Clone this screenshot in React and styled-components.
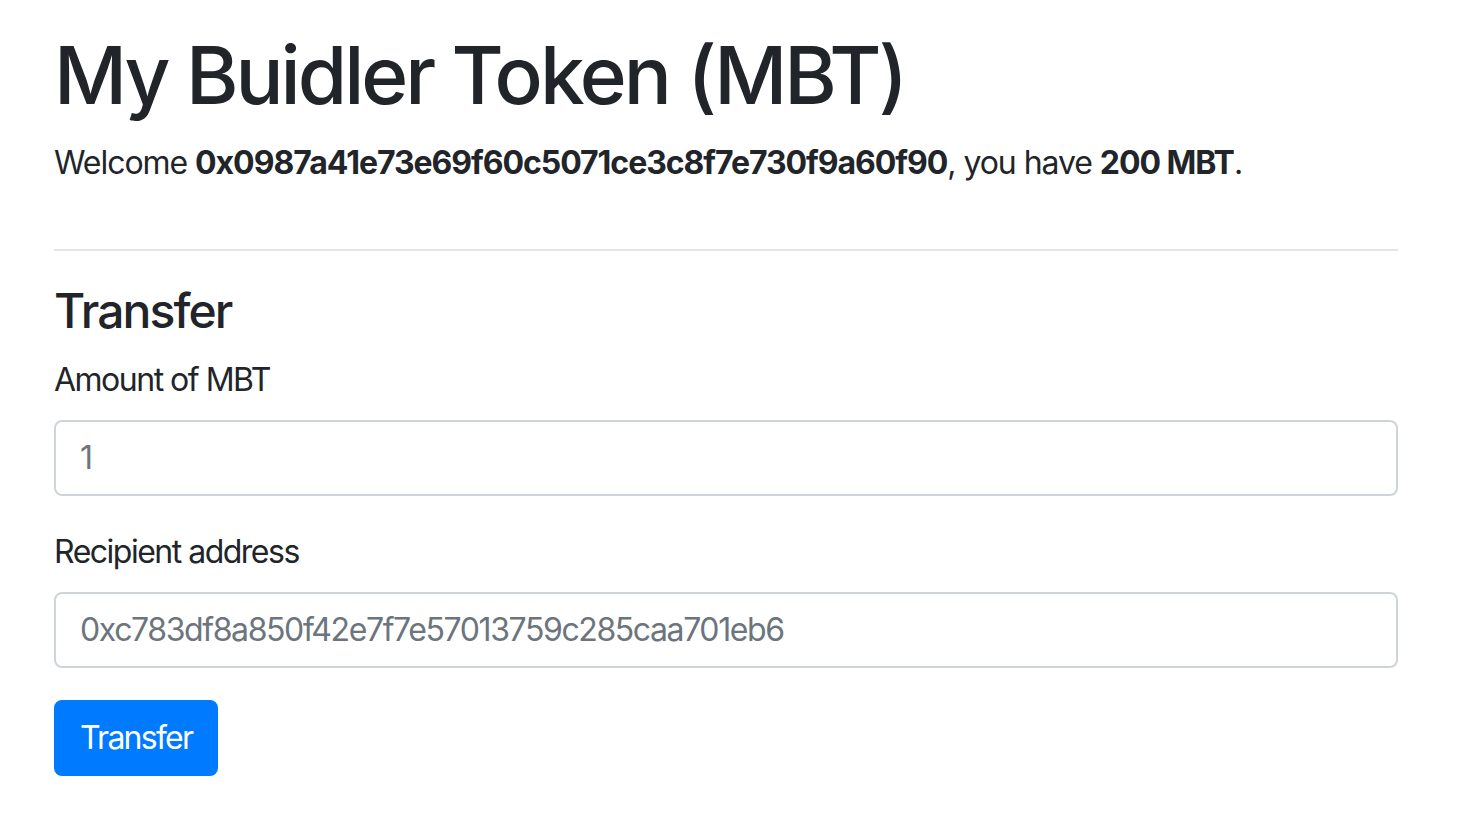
import React, { useState } from "react";
import styled, { createGlobalStyle } from "styled-components";

const GlobalStyle = createGlobalStyle`
    * {
        box-sizing: border-box;
    }

    body {
        margin: 0;
        background: #fff;
        color: #212529;
        font-family: Inter, "Noto Sans", "Liberation Sans", sans-serif;
        font-size: 32px;
        line-height: 1.5;
    }
`;

const Page = styled.div`
    width: 1344px;
    margin-left: 54px;
    padding-top: 27px;
`;

const Title = styled.h1`
    margin: 0 0 16px;
    font-size: 80px;
    font-weight: 500;
    line-height: 1.2;
    letter-spacing: -3px;
`;

const Welcome = styled.p`
    margin: 0 0 32px;
    letter-spacing: -1.05px;

    b {
        font-weight: 700;
    }
`;

const Divider = styled.hr`
    margin: 62px 0 31px;
    border: 0;
    border-top: 2px solid rgba(0, 0, 0, 0.1);
`;

const SectionTitle = styled.h4`
    margin: 0 0 16px;
    font-size: 48px;
    font-weight: 500;
    line-height: 1.2;
    letter-spacing: -1.9px;
`;

const FormGroup = styled.div`
    margin-bottom: 32px;
`;

const Label = styled.label`
    display: inline-block;
    margin-bottom: 16px;
    letter-spacing: -1.5px;
`;

const Input = styled.input`
    display: block;
    width: 100%;
    height: 76px;
    padding: 12px 24px;
    font-family: inherit;
    font-size: 32px;
    line-height: 1.5;
    letter-spacing: -1.4px;
    color: #495057;
    background: #fff;
    border: 2px solid #ced4da;
    border-radius: 8px;
    outline: none;

    &::placeholder {
        color: #6c757d;
        opacity: 1;
    }
`;

const Button = styled.button`
    display: inline-block;
    height: 76px;
    padding: 12px 24px;
    font-family: inherit;
    font-size: 32px;
    line-height: 1.5;
    font-weight: 400;
    letter-spacing: -1.75px;
    color: #fff;
    background: #007bff;
    border: 2px solid #007bff;
    border-radius: 8px;
    cursor: pointer;
`;

export default function App() {
    const [amount, setAmount] = useState("");
    const [to, setTo] = useState("");

    return (
        <Page>
            <GlobalStyle />
            <Title>My Buidler Token (MBT)</Title>
            <Welcome>
                Welcome <b>0x0987a41e73e69f60c5071ce3c8f7e730f9a60f90</b>, you have{" "}
                <b>200 MBT</b>.
            </Welcome>
            <Divider />
            <SectionTitle>Transfer</SectionTitle>
            <form onSubmit={(e) => e.preventDefault()}>
                <FormGroup>
                    <Label>Amount of MBT</Label>
                    <Input
                        type="number"
                        placeholder="1"
                        value={amount}
                        onChange={(e) => setAmount(e.target.value)}
                    />
                </FormGroup>
                <FormGroup>
                    <Label>Recipient address</Label>
                    <Input
                        type="text"
                        placeholder="0xc783df8a850f42e7f7e57013759c285caa701eb6"
                        value={to}
                        onChange={(e) => setTo(e.target.value)}
                    />
                </FormGroup>
                <Button type="submit">Transfer</Button>
            </form>
        </Page>
    );
}
